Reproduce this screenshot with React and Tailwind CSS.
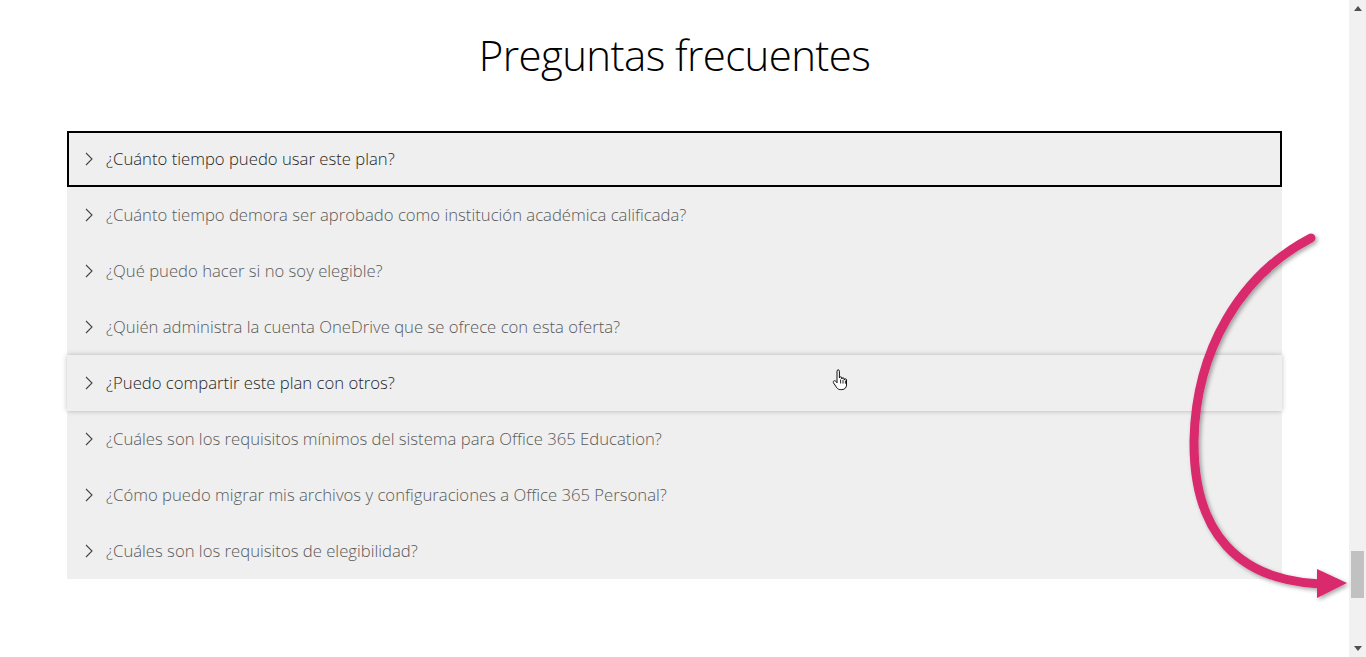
import React from 'react';

const questions = [
    '¿Cuánto tiempo puedo usar este plan?',
    '¿Cuánto tiempo demora ser aprobado como institución académica calificada?',
    '¿Qué puedo hacer si no soy elegible?',
    '¿Quién administra la cuenta OneDrive que se ofrece con esta oferta?',
    '¿Puedo compartir este plan con otros?',
    '¿Cuáles son los requisitos mínimos del sistema para Office 365 Education?',
    '¿Cómo puedo migrar mis archivos y configuraciones a Office 365 Personal?',
    '¿Cuáles son los requisitos de elegibilidad?',
];

const Chevron = () => (
    <svg width="8" height="14" viewBox="0 0 8 14" className="shrink-0">
        <path d="M1 1l6 6-6 6" fill="none" stroke="#444" strokeWidth="1.1" />
    </svg>
);

const Hand = () => (
    <svg width="18" height="22" viewBox="0 0 18 22" className="absolute left-[832px] top-[369px]">
        <path d="M5 2.2c0-.9.6-1.4 1.2-1.4s1.2.5 1.2 1.4V9c0-.8.6-1.2 1.2-1.2s1.2.4 1.2 1.2v1c0-.8.6-1.2 1.2-1.2s1.2.4 1.2 1.2v1c0-.8.6-1.2 1.2-1.2s1.1.4 1.1 1.2v5c0 2.6-1.8 4.6-4.6 4.6H8.2c-1.4 0-2.4-.6-3.300-1.7L1.6 14c-.6-.8-.4-1.7.3-2.1.7-.4 1.5-.1 2 .5L5 13.8z" fill="#fff" stroke="#111" strokeWidth="1" strokeLinejoin="round" />
        <path d="M8.6 10.5v4M11 11v3.6M13.4 11.5v3.2" stroke="#111" strokeWidth="0.9" />
    </svg>
);

const Annotation = () => (
    <svg width="1366" height="657" className="absolute left-0 top-0 pointer-events-none">
        <defs>
            <filter id="sh" x="-20%" y="-20%" width="140%" height="140%">
                <feDropShadow dx="2" dy="2" stdDeviation="2" floodColor="#000" floodOpacity="0.35" />
            </filter>
        </defs>
        <g filter="url(#sh)">
            <path d="M1311 238C1240 275 1196 350 1194 440C1193 535 1240 580 1320 584" fill="none" stroke="#d92a6e" strokeWidth="9" strokeLinecap="round" />
            <path d="M1317 569L1347 583L1317 598Z" fill="#d92a6e" />
        </g>
    </svg>
);

const Scrollbar = () => (
    <div className="w-[17px] h-full bg-[#f1f1f1] flex flex-col items-center justify-between py-[6px] relative">
        <div className="w-0 h-0 border-l-[4px] border-r-[4px] border-b-[5px] border-l-transparent border-r-transparent border-b-[#505050]" />
        <div className="absolute left-[2px] top-[551px] w-[13px] h-[47px] bg-[#c1c1c1]" />
        <div className="w-0 h-0 border-l-[4px] border-r-[4px] border-t-[5px] border-l-transparent border-r-transparent border-t-[#505050]" />
    </div>
);

export default function App() {
    return (
        <div className="relative w-[1366px] h-[657px] overflow-hidden bg-white flex" style={{ fontFamily: '"Open Sans", "Noto Sans", sans-serif' }}>
            <div className="flex-1 flex flex-col items-center">
                <h1 className="mt-[23px] text-[42px] font-light leading-[64px] text-black tracking-[-0.6px]">Preguntas frecuentes</h1>
                <div className="mt-[44px] w-[1215px] bg-[#efefef]">
                    {questions.map((q, i) => (
                        <div
                            key={q}
                            className={`h-[56px] flex items-center gap-[13px] ${i === 0 ? 'border-2 border-black text-[#262626] pl-[16px]' : i === 4 ? 'shadow-[0_0_5px_rgba(0,0,0,0.25)] text-[#262626] pl-[18px] relative' : 'text-[#5a5a5a] pl-[18px]'}`}
                        >
                            <Chevron />
                            <span className="text-[16.7px] font-light leading-none">{q}</span>
                        </div>
                    ))}
                </div>
            </div>
            <Scrollbar />
            <Hand />
            <Annotation />
        </div>
    );
}
